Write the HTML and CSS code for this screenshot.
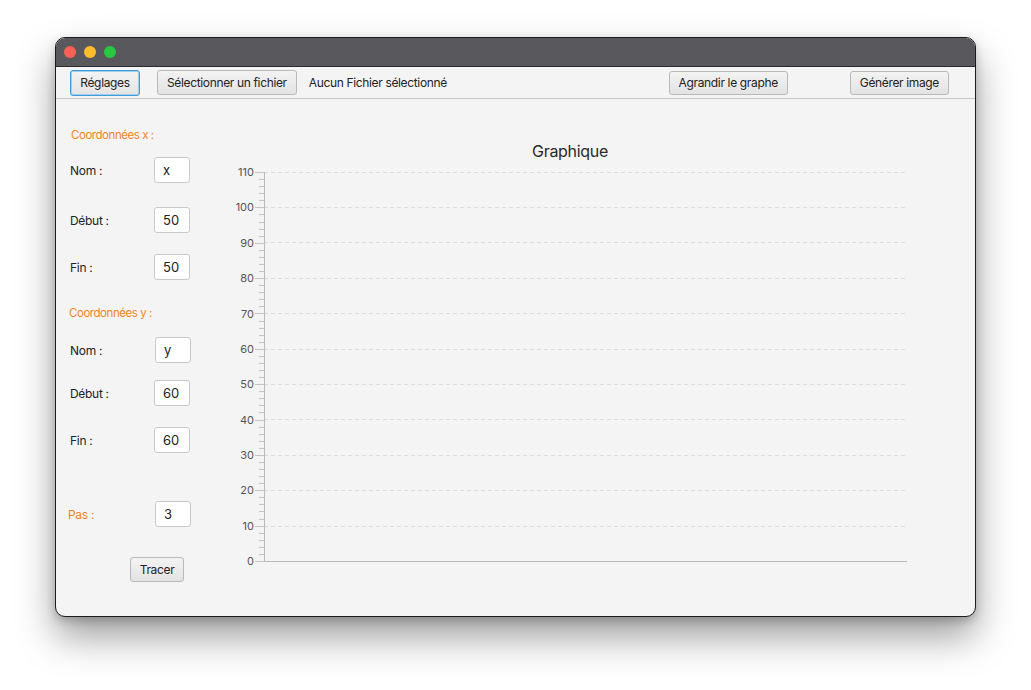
FILE: index.html
```html
<!DOCTYPE html>
<html lang="fr">
<head>
<meta charset="utf-8">
<title>Graphique</title>
<link rel="stylesheet" href="styles.css">
</head>
<body>
<div class="window">
  <div class="titlebar">
    <span class="light red"></span>
    <span class="light orange"></span>
    <span class="light green"></span>
  </div>
  <div class="toolbar">
    <button class="btn focused">Réglages</button>
    <button class="btn select">Sélectionner un fichier</button>
    <span class="filename">Aucun Fichier sélectionné</span>
    <button class="btn enlarge">Agrandir le graphe</button>
    <button class="btn">Générer image</button>
  </div>
  <div class="content">
    <div class="panel">
      <div class="section-title">Coordonnées x :</div>
      <div class="row r-nom-x"><span class="label">Nom :</span><input class="field" value="x"></div>
      <div class="row r-debut-x"><span class="label">Début :</span><input class="field" value="50"></div>
      <div class="row r-fin-x"><span class="label">Fin :</span><input class="field" value="50"></div>
      <div class="section-title shifted t-y">Coordonnées y :</div>
      <div class="row r-nom-y"><span class="label">Nom :</span><input class="field nudge" value="y"></div>
      <div class="row r-debut-y"><span class="label">Début :</span><input class="field" value="60"></div>
      <div class="row r-fin-y"><span class="label">Fin :</span><input class="field" value="60"></div>
      <div class="row r-pas"><span class="label accent shifted">Pas :</span><input class="field nudge" value="3"></div>
      <div class="row r-tracer"><button class="btn tracer">Tracer</button></div>
    </div>
    <div class="chart">
      <div class="chart-title">Graphique</div>
      <svg class="plot" width="676" height="420" viewBox="0 0 676 420">
        <g class="grid">
          <line x1="32" y1="11.5" x2="675" y2="11.5"/>
          <line x1="32" y1="46.5" x2="675" y2="46.5"/>
          <line x1="32" y1="81.5" x2="675" y2="81.5"/>
          <line x1="32" y1="117.5" x2="675" y2="117.5"/>
          <line x1="32" y1="152.5" x2="675" y2="152.5"/>
          <line x1="32" y1="188.5" x2="675" y2="188.5"/>
          <line x1="32" y1="223.5" x2="675" y2="223.5"/>
          <line x1="32" y1="258.5" x2="675" y2="258.5"/>
          <line x1="32" y1="294.5" x2="675" y2="294.5"/>
          <line x1="32" y1="329.5" x2="675" y2="329.5"/>
          <line x1="32" y1="365.5" x2="675" y2="365.5"/>
        </g>
        <g class="ticks" id="ticks"></g>
        <line class="axis" x1="32.5" y1="11" x2="32.5" y2="400"/>
        <line class="axis" x1="32" y1="400.5" x2="675" y2="400.5"/>
        <g class="labels">
          <text x="22" y="15">110</text>
          <text x="22" y="50.4">100</text>
          <text x="22" y="85.7">90</text>
          <text x="22" y="121.1">80</text>
          <text x="22" y="156.5">70</text>
          <text x="22" y="191.8">60</text>
          <text x="22" y="227.2">50</text>
          <text x="22" y="262.5">40</text>
          <text x="22" y="297.9">30</text>
          <text x="22" y="333.3">20</text>
          <text x="22" y="368.6">10</text>
          <text x="22" y="404">0</text>
        </g>
      </svg>
    </div>
  </div>
</div>
<script>
(function () {
  var g = document.getElementById('ticks');
  var ns = 'http://www.w3.org/2000/svg';
  var step = 389 / 55;
  for (var i = 0; i <= 55; i++) {
    var y = Math.round(11 + i * step) + 0.5;
    var l = document.createElementNS(ns, 'line');
    l.setAttribute('x1', i % 5 === 0 ? 23 : 27);
    l.setAttribute('x2', 32);
    l.setAttribute('y1', y);
    l.setAttribute('y2', y);
    g.appendChild(l);
  }
})();
</script>
</body>
</html>
```

FILE: styles.css
```css
* { box-sizing: border-box; }

html, body {
  margin: 0;
  background: #ffffff;
}

body {
  font-family: Inter, "Liberation Sans", sans-serif;
  font-size: 12px;
  color: #222222;
  padding: 37px 0 0 55px;
  min-height: 690px;
}

.window {
  width: 921px;
  height: 580px;
  border: 1px solid #1c1c1c;
  border-radius: 10px;
  overflow: hidden;
  background: #f4f4f4;
  box-shadow: 0 20px 38px rgba(0, 0, 0, 0.38), 0 4px 10px rgba(0, 0, 0, 0.2);
  display: flex;
  flex-direction: column;
}

.titlebar {
  height: 29px;
  background: #59585d;
  display: flex;
  align-items: center;
  gap: 8px;
  padding-left: 8px;
  border-bottom: 1px solid #2a2a2a;
}

.light {
  width: 12px;
  height: 12px;
  border-radius: 50%;
}
.red { background: #fe5f57; }
.orange { background: #febc2e; }
.green { background: #28c840; }

.toolbar {
  height: 32px;
  display: flex;
  align-items: center;
  padding: 0 26px 0 14px;
  border-bottom: 1px solid #c9c9c9;
}

.btn {
  font-family: inherit;
  font-size: 12px;
  color: #222222;
  height: 24px;
  padding: 0 9px;
  border: 1px solid #b9b9b9;
  border-radius: 3px;
  background: linear-gradient(#f3f3f3, #e3e3e3);
  letter-spacing: -0.35px;
}

.btn.focused {
  height: 26px;
  width: 70px;
  border: 1px solid #3f9ad8;
  box-shadow: 0 0 0 1px #9fcdee inset;
}

.btn.select { margin-left: 17px; height: 25px; }

.filename {
  margin-left: 12px;
  letter-spacing: -0.35px;
}

.btn.enlarge {
  margin-left: auto;
  margin-right: 62px;
}

.content {
  flex: 1;
  display: flex;
}

.panel {
  width: 176px;
  padding: 28px 0 0 14px;
  display: flex;
  flex-direction: column;
}

.section-title {
  height: 16px;
  line-height: 16px;
  color: #f2841e;
  font-size: 11.5px;
  letter-spacing: -0.45px;
  padding-left: 1px;
}

.shifted { margin-left: -2px; }

.t-y { margin-top: 25px; }

.row {
  height: 26px;
  display: flex;
  align-items: center;
}

.label {
  width: 84px;
  letter-spacing: -0.3px;
}

.label.accent { color: #f2841e; width: 86px; }

.field {
  width: 36px;
  height: 26px;
  border: 1px solid #c9c9c9;
  border-radius: 3px;
  background: #ffffff;
  font-family: inherit;
  font-size: 13px;
  color: #222222;
  padding: 0 0 0 8px;
  outline: none;
}

.field.nudge { margin-left: 1px; }

.r-nom-x { margin-top: 14px; }
.r-debut-x { margin-top: 24px; }
.r-fin-x { margin-top: 21px; }
.r-nom-y { margin-top: 16px; }
.r-debut-y { margin-top: 17px; }
.r-fin-y { margin-top: 21px; }
.r-pas { margin-top: 48px; }
.r-tracer { margin-top: 30px; height: 25px; }

.btn.tracer {
  margin-left: 60px;
  height: 25px;
  width: 54px;
  padding: 0;
}

.chart {
  width: 676px;
  padding-top: 42px;
  display: flex;
  flex-direction: column;
}

.chart-title {
  height: 20px;
  line-height: 20px;
  text-align: center;
  font-size: 16px;
  color: #2a2a2a;
  letter-spacing: -0.3px;
}

.plot { display: block; }

.grid line {
  stroke: #dddddd;
  stroke-width: 1;
  stroke-dasharray: 4 3;
}

.ticks line {
  stroke: #c4c4c4;
  stroke-width: 1;
}

.axis {
  stroke: #b9b9b9;
  stroke-width: 1;
}

.labels text {
  font-family: Inter, "Liberation Sans", sans-serif;
  font-size: 11px;
  fill: #555555;
  text-anchor: end;
}
```
